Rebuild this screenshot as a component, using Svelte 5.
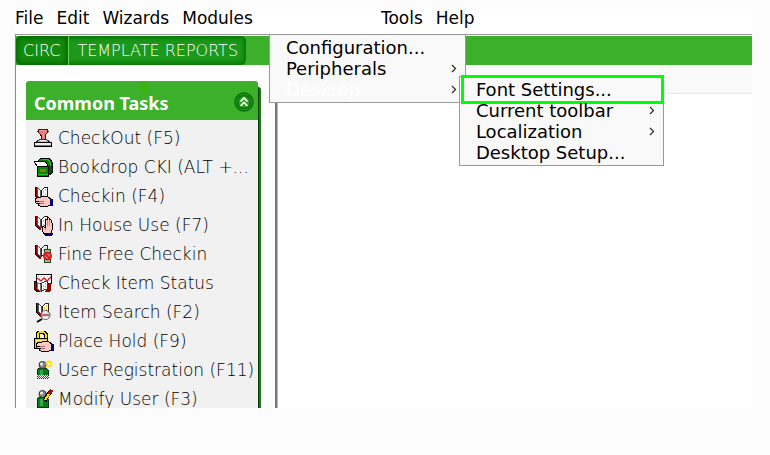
<script lang="ts">
	type IconName =
		| 'stamp'
		| 'bookdrop'
		| 'checkin'
		| 'inhouse'
		| 'finefree'
		| 'status'
		| 'search'
		| 'hold'
		| 'user'
		| 'modify';

	type MenuEntry = { label: string; submenu?: boolean; active?: boolean; marked?: boolean };

	const menusLeft = ['File', 'Edit', 'Wizards', 'Modules'];
	const menusRight = ['Tools', 'Help'];

	const desktopMenu: MenuEntry[] = [
		{ label: 'Configuration...' },
		{ label: 'Peripherals', submenu: true },
		{ label: 'Desktop', submenu: true, active: true }
	];

	const subMenu: MenuEntry[] = [
		{ label: 'Font Settings...', marked: true },
		{ label: 'Current toolbar', submenu: true },
		{ label: 'Localization', submenu: true },
		{ label: 'Desktop Setup...' }
	];

	const tasks: { label: string; icon: IconName }[] = [
		{ label: 'CheckOut (F5)', icon: 'stamp' },
		{ label: 'Bookdrop CKI (ALT +...', icon: 'bookdrop' },
		{ label: 'Checkin (F4)', icon: 'checkin' },
		{ label: 'In House Use (F7)', icon: 'inhouse' },
		{ label: 'Fine Free Checkin', icon: 'finefree' },
		{ label: 'Check Item Status', icon: 'status' },
		{ label: 'Item Search (F2)', icon: 'search' },
		{ label: 'Place Hold (F9)', icon: 'hold' },
		{ label: 'User Registration (F11)', icon: 'user' },
		{ label: 'Modify User (F3)', icon: 'modify' }
	];

	let tab = $state('CIRC');
	let open = $state(true);
</script>

{#snippet book()}
	<path d="M1 0h2v9l4 3v2H5l-4-4z" fill="#900" />
	<path d="M1.500 0v9.500l4 4" fill="none" stroke="#000" />
	<path d="M3.500 .5l3 3v8l-3-3z" fill="#fff" stroke="#555" />
	<path d="M7.500 3.500l3-3h3v9h-3l-3 2z" fill="#fff" stroke="#222" />
	<path d="M9 5h1M11 3h1M9 9h1M11 7h1" stroke="#fb0" stroke-width="2" />
{/snippet}

{#snippet hand()}
	<path d="M1 12l3-2h3l2-1h4l4 3v6l-3 1H6l-2-1v-1l2-1H2l-1-1 4-1H1z" fill="#ffc8c0" stroke="#000" />
	<path d="M6 16h4M5 14h5" stroke="#a66" />
	<path d="M16 12h3v7h-3z" fill="#008" />
{/snippet}

{#snippet icon(name: IconName)}
	<svg class="icon" viewBox="0 -1 20 21" shape-rendering="crispEdges" aria-hidden="true">
		{#if name === 'stamp'}
			<path d="M5 .5h8l1 2-3 4v4H7v-4l-3-4z" fill="#e47b7b" stroke="#511" />
			<path d="M6 1h6M9 4v5" stroke="#f09a9a" />
			<path d="M6 10h6l5 4H1z" fill="#bbb" stroke="#333" />
			<path d="M6 11h6" stroke="#fff" />
			<path d="M.5 13.500h17v4H.5z" fill="#eee" stroke="#000" />
			<path d="M1 16.500h16" stroke="#777" />
		{:else if name === 'bookdrop'}
			<path d="M4 3l3-3h8l3 4v11l-4 3H4z" fill="#080" stroke="#000" />
			<path d="M15 7v10l3-3V5z" fill="#050" />
			<path d="M8 1h6l2 3v4" fill="none" stroke="#3b3" />
			<path d="M0 4l4-1h7l2 3v2H3z" fill="#fff" stroke="#000" />
			<path d="M3 8h11v10H3z" fill="#080" stroke="#000" />
			<path d="M6 11h6v3H6z" fill="#970" />
			<path d="M4 16h10" stroke="#3b3" />
		{:else if name === 'checkin'}
			{@render book()}
			{@render hand()}
		{:else if name === 'inhouse'}
			{@render book()}
			<path d="M9 16l-1-5 1-1 2 2V4l1-1 1 1V2l1-1 1 1v2l1-1 1 1v2l1 1v7l-1 3v2h-6z" fill="#ffc8c0" stroke="#000" />
			<path d="M13 4v6M15 4v6M11 12l1 2" stroke="#c88" />
			<path d="M11 17h8v2h-8z" fill="#008" />
		{:else if name === 'finefree'}
			{@render book()}
			<path d="M10.500 4.500h6v13h-6z" fill="#9c8" stroke="#242" />
			<g shape-rendering="auto">
				<circle cx="13.500" cy="11" r="3.500" fill="#999" stroke="#e01818" stroke-width="2" />
				<path d="M11 8.500l5 5" stroke="#e01818" stroke-width="2" />
			</g>
		{:else if name === 'status'}
			<path d="M2.500 .5h15v9h-15z" fill="#fff" stroke="#000" />
			<path d="M4 2.500h13M5 4.500h12" stroke="#aac" stroke-dasharray="1 2" />
			<path d="M.5 7.500h2v6l4 4H3l-2.500-2z" fill="#900" stroke="#300" />
			<path d="M15 9h2v8l-3 1h-3z" fill="#900" />
			<path d="M3.500 8.500l3 2v7l-3-3z" fill="#fff" stroke="#777" />
			<path d="M7.500 9.500l3-2h3v8h-3l-3 2z" fill="#fff" stroke="#333" />
			<path d="M9 12h1M11 10h1M9 15h1M11 13h1" stroke="#fb0" stroke-width="2" />
			<path d="M3 4l4 3 3-3 3 3 4-4" fill="none" stroke="#e11" shape-rendering="auto" stroke-width="1.300" />
		{:else if name === 'search'}
			<g transform="translate(1 0)">{@render book()}</g>
			<g shape-rendering="auto">
				<circle cx="11.500" cy="12" r="4.500" fill="#ddd" stroke="#555" />
				<path d="M8 12h7" stroke="#b66" stroke-width="2" />
				<path d="M9 15h5M9 9h4" stroke="#fff" />
				<path d="M8 16l-5 3" stroke="#000" stroke-width="2" />
			</g>
		{:else if name === 'hold'}
			<path d="M3.500 8V2l2-2h4l2 2v6" fill="none" stroke="#000" stroke-width="4" />
			<path d="M3.500 8V2l2-2h4l2 2v6" fill="none" stroke="#fd0" stroke-width="2" />
			<path d="M.5 6.500h13v10H.5z" fill="#fb0" stroke="#000" />
			<path d="M2 8h10M2 8v7" stroke="#fe6" />
			<g transform="translate(1 0)">{@render hand()}</g>
		{:else}
			<path d="M4.500 7.500h8l2 2v8h-11v-9z" fill="#0a7a1c" stroke="#031" />
			<path d="M6 9h3v7H6z" fill="#3a4" />
			<g shape-rendering="auto">
				<circle cx="8.500" cy="4" r="3.500" fill="#888" stroke="#333" />
				<circle cx="7.500" cy="3" r="1.500" fill="#eee" />
			</g>
			{#if name === 'user'}
				<path d="M3 14.500h13M3 16.500h13" stroke="#f1f1f1" stroke-dasharray="1 1" />
				<path d="M4 15.500h13M4 17.500h13" stroke="#f1f1f1" stroke-dasharray="1 1" />
				<g shape-rendering="auto">
					<path d="M15-1v8M11 3h8M12 0l6 6M18 0l-6 6" stroke="#fd0" stroke-width="1.200" />
				</g>
				<path d="M14 2h2v2h-2z" fill="#fff" />
			{:else}
				<path d="M18 0l-5 6-2 5" fill="none" stroke="#000" stroke-width="4" />
				<path d="M15 4l-2 3-2 3" fill="none" stroke="#fd0" stroke-width="2" />
				<path d="M18 0l-3 4" stroke="#a11" stroke-width="3" />
			{/if}
		{/if}
	</svg>
{/snippet}

{#snippet entries(list: MenuEntry[])}
	{#each list as entry}
		<button class="entry" class:active={entry.active} class:marked={entry.marked} role="menuitem">
			<span>{entry.label}</span>
			{#if entry.submenu}
				<svg class="arrow" viewBox="0 0 6 9" aria-hidden="true">
					<path d="M1 1l3.500 3.500L1 8" fill="none" stroke="#333" stroke-width="1.300" />
				</svg>
			{/if}
		</button>
	{/each}
{/snippet}

<div class="window">
	<nav class="menubar">
		{#each menusLeft as item}
			<button class="menu">{item}</button>
		{/each}
		<div class="opened">
			<div class="popup main-popup" role="menu">
				{@render entries(desktopMenu)}
				<div class="popup sub-popup" role="menu">
					{@render entries(subMenu)}
				</div>
			</div>
		</div>
		{#each menusRight as item}
			<button class="menu">{item}</button>
		{/each}
	</nav>

	<div class="frame">
		<div class="tabbar">
			<div class="tabs">
				{#each ['CIRC', 'TEMPLATE REPORTS'] as name}
					<button class="tab" class:current={tab === name} onclick={() => (tab = name)}>{name}</button>
				{/each}
			</div>
		</div>

		<div class="columns">
			<aside class="sidebar">
				<section class="panel">
					<header class="panel-head">
						<h2>Common Tasks</h2>
						<button class="collapse" aria-label="Toggle Common Tasks" onclick={() => (open = !open)}>
							<svg viewBox="0 0 20 20" aria-hidden="true">
								<circle cx="10" cy="10" r="9" fill="#2a9c20" stroke="#0a700a" stroke-width="1.500" />
								<circle cx="10" cy="10" r="6.500" fill="#2f9f25" stroke="#0a700a" stroke-width="1.500" />
								<path d="M6.500 9.500L10 6l3.500 3.500M6.500 14L10 10.500l3.500 3.500" fill="none" stroke="#fff" stroke-width="1.600" />
							</svg>
						</button>
					</header>
					{#if open}
						<ul class="tasks">
							{#each tasks as task}
								<li>
									<button class="task">
										{@render icon(task.icon)}
										<span>{task.label}</span>
									</button>
								</li>
							{/each}
						</ul>
					{/if}
				</section>
			</aside>
			<main class="content">
				<div class="toolbar"></div>
			</main>
		</div>
	</div>
</div>

<style>
	:global(body) {
		margin: 0;
		background: #fcfcfc;
	}

	button {
		margin: 0;
		padding: 0;
		border: 0;
		background: none;
		color: inherit;
		font: inherit;
		text-align: left;
		white-space: nowrap;
		cursor: pointer;
	}

	.window {
		box-sizing: border-box;
		display: flex;
		flex-direction: column;
		height: calc(100vh - 56px);
		margin: 9px 18px 0 15px;
		background: #fff;
		color: #000;
		font-family: 'DejaVu Sans', Verdana, sans-serif;
		font-size: 17px;
		line-height: 21px;
	}

	.menubar {
		display: flex;
		gap: 13px;
		height: 25px;
		flex: none;
	}

	.menu {
		height: 18px;
		line-height: 18px;
	}

	.opened {
		position: relative;
		width: 99px;
		margin-left: 3px;
	}

	.popup {
		position: absolute;
		box-sizing: border-box;
		border: 1px solid #999;
		background: #f9f9f9;
		font-size: 18px;
		z-index: 10;
	}

	.main-popup {
		top: 25px;
		left: 0;
		width: 197px;
		padding: 2px 0;
	}

	.sub-popup {
		top: 41px;
		left: 189px;
		width: 205px;
		padding: 2px 0;
	}

	.entry {
		position: relative;
		display: flex;
		align-items: center;
		justify-content: space-between;
		width: 100%;
		padding: 0 8px 0 16px;
	}

	.entry.active {
		color: #fff;
	}

	.entry.marked::after {
		content: '';
		position: absolute;
		inset: -4px -1px -4px 1px;
		border: 3px solid #0f0;
	}

	.arrow {
		width: 6px;
		height: 9px;
	}

	.frame {
		display: flex;
		flex-direction: column;
		flex: 1;
		min-height: 0;
		border-top: 1px solid #999;
		border-left: 1px solid #888;
	}

	.tabbar {
		flex: none;
		height: 29px;
		margin-top: 1px;
		background: #3cb02a;
	}

	.tabs {
		display: inline-flex;
		height: 29px;
		border-radius: 5px;
		background: #1c981a;
		box-shadow: inset 0 0 5px 2px #007400;
		color: #fff;
		font-size: 16px;
		font-weight: 200;
	}

	.tab {
		padding: 0 8px;
		border-radius: 5px;
	}

	.tab.current {
		padding: 0 8px 0 7px;
		border-right: 1px solid #6cd05a;
		border-radius: 5px 0 0 5px;
		background: #138c0c;
		box-shadow: inset 0 0 5px 2px #006800;
	}

	.columns {
		display: flex;
		flex: 1;
		min-height: 0;
	}

	.sidebar {
		box-sizing: border-box;
		flex: none;
		width: 259px;
		padding: 16px 17px 0 10px;
		overflow: hidden;
	}

	.panel {
		border-radius: 3px 3px 0 0;
		background: #f1f1f1;
		box-shadow: 1px 5px 0 #003808, 3px 6px 0 #1a7a10;
	}

	.panel-head {
		display: flex;
		align-items: center;
		justify-content: space-between;
		height: 39px;
		padding: 0 4px 0 8px;
		border-radius: 3px 3px 0 0;
		background: #3cb02a linear-gradient(#3cb400, #3cb400) 115px 1px / 4px 12px no-repeat;
	}

	.panel-head h2 {
		margin: 5px 0 0;
		color: #fff;
		font-family: 'Noto Sans', 'Open Sans', sans-serif;
		font-size: 18px;
		font-weight: 700;
		line-height: 21px;
	}

	.collapse {
		width: 20px;
		height: 20px;
		margin-top: 3px;
	}

	.collapse svg {
		display: block;
	}

	.tasks {
		margin: 0;
		padding: 4px 0 0;
		list-style: none;
	}

	.task {
		display: flex;
		align-items: center;
		gap: 4px;
		width: 100%;
		height: 29px;
		padding-left: 8px;
		font-size: 17px;
		font-weight: 200;
	}

	.icon {
		flex: none;
		width: 20px;
		height: 21px;
	}

	.content {
		flex: 1;
		min-width: 0;
		border-left: 2px solid #777;
		box-shadow: inset 1px 0 #bbb;
	}

	.toolbar {
		height: 28px;
		border-bottom: 1px solid #e8e8e8;
		background: #f9f9f9;
	}
</style>
